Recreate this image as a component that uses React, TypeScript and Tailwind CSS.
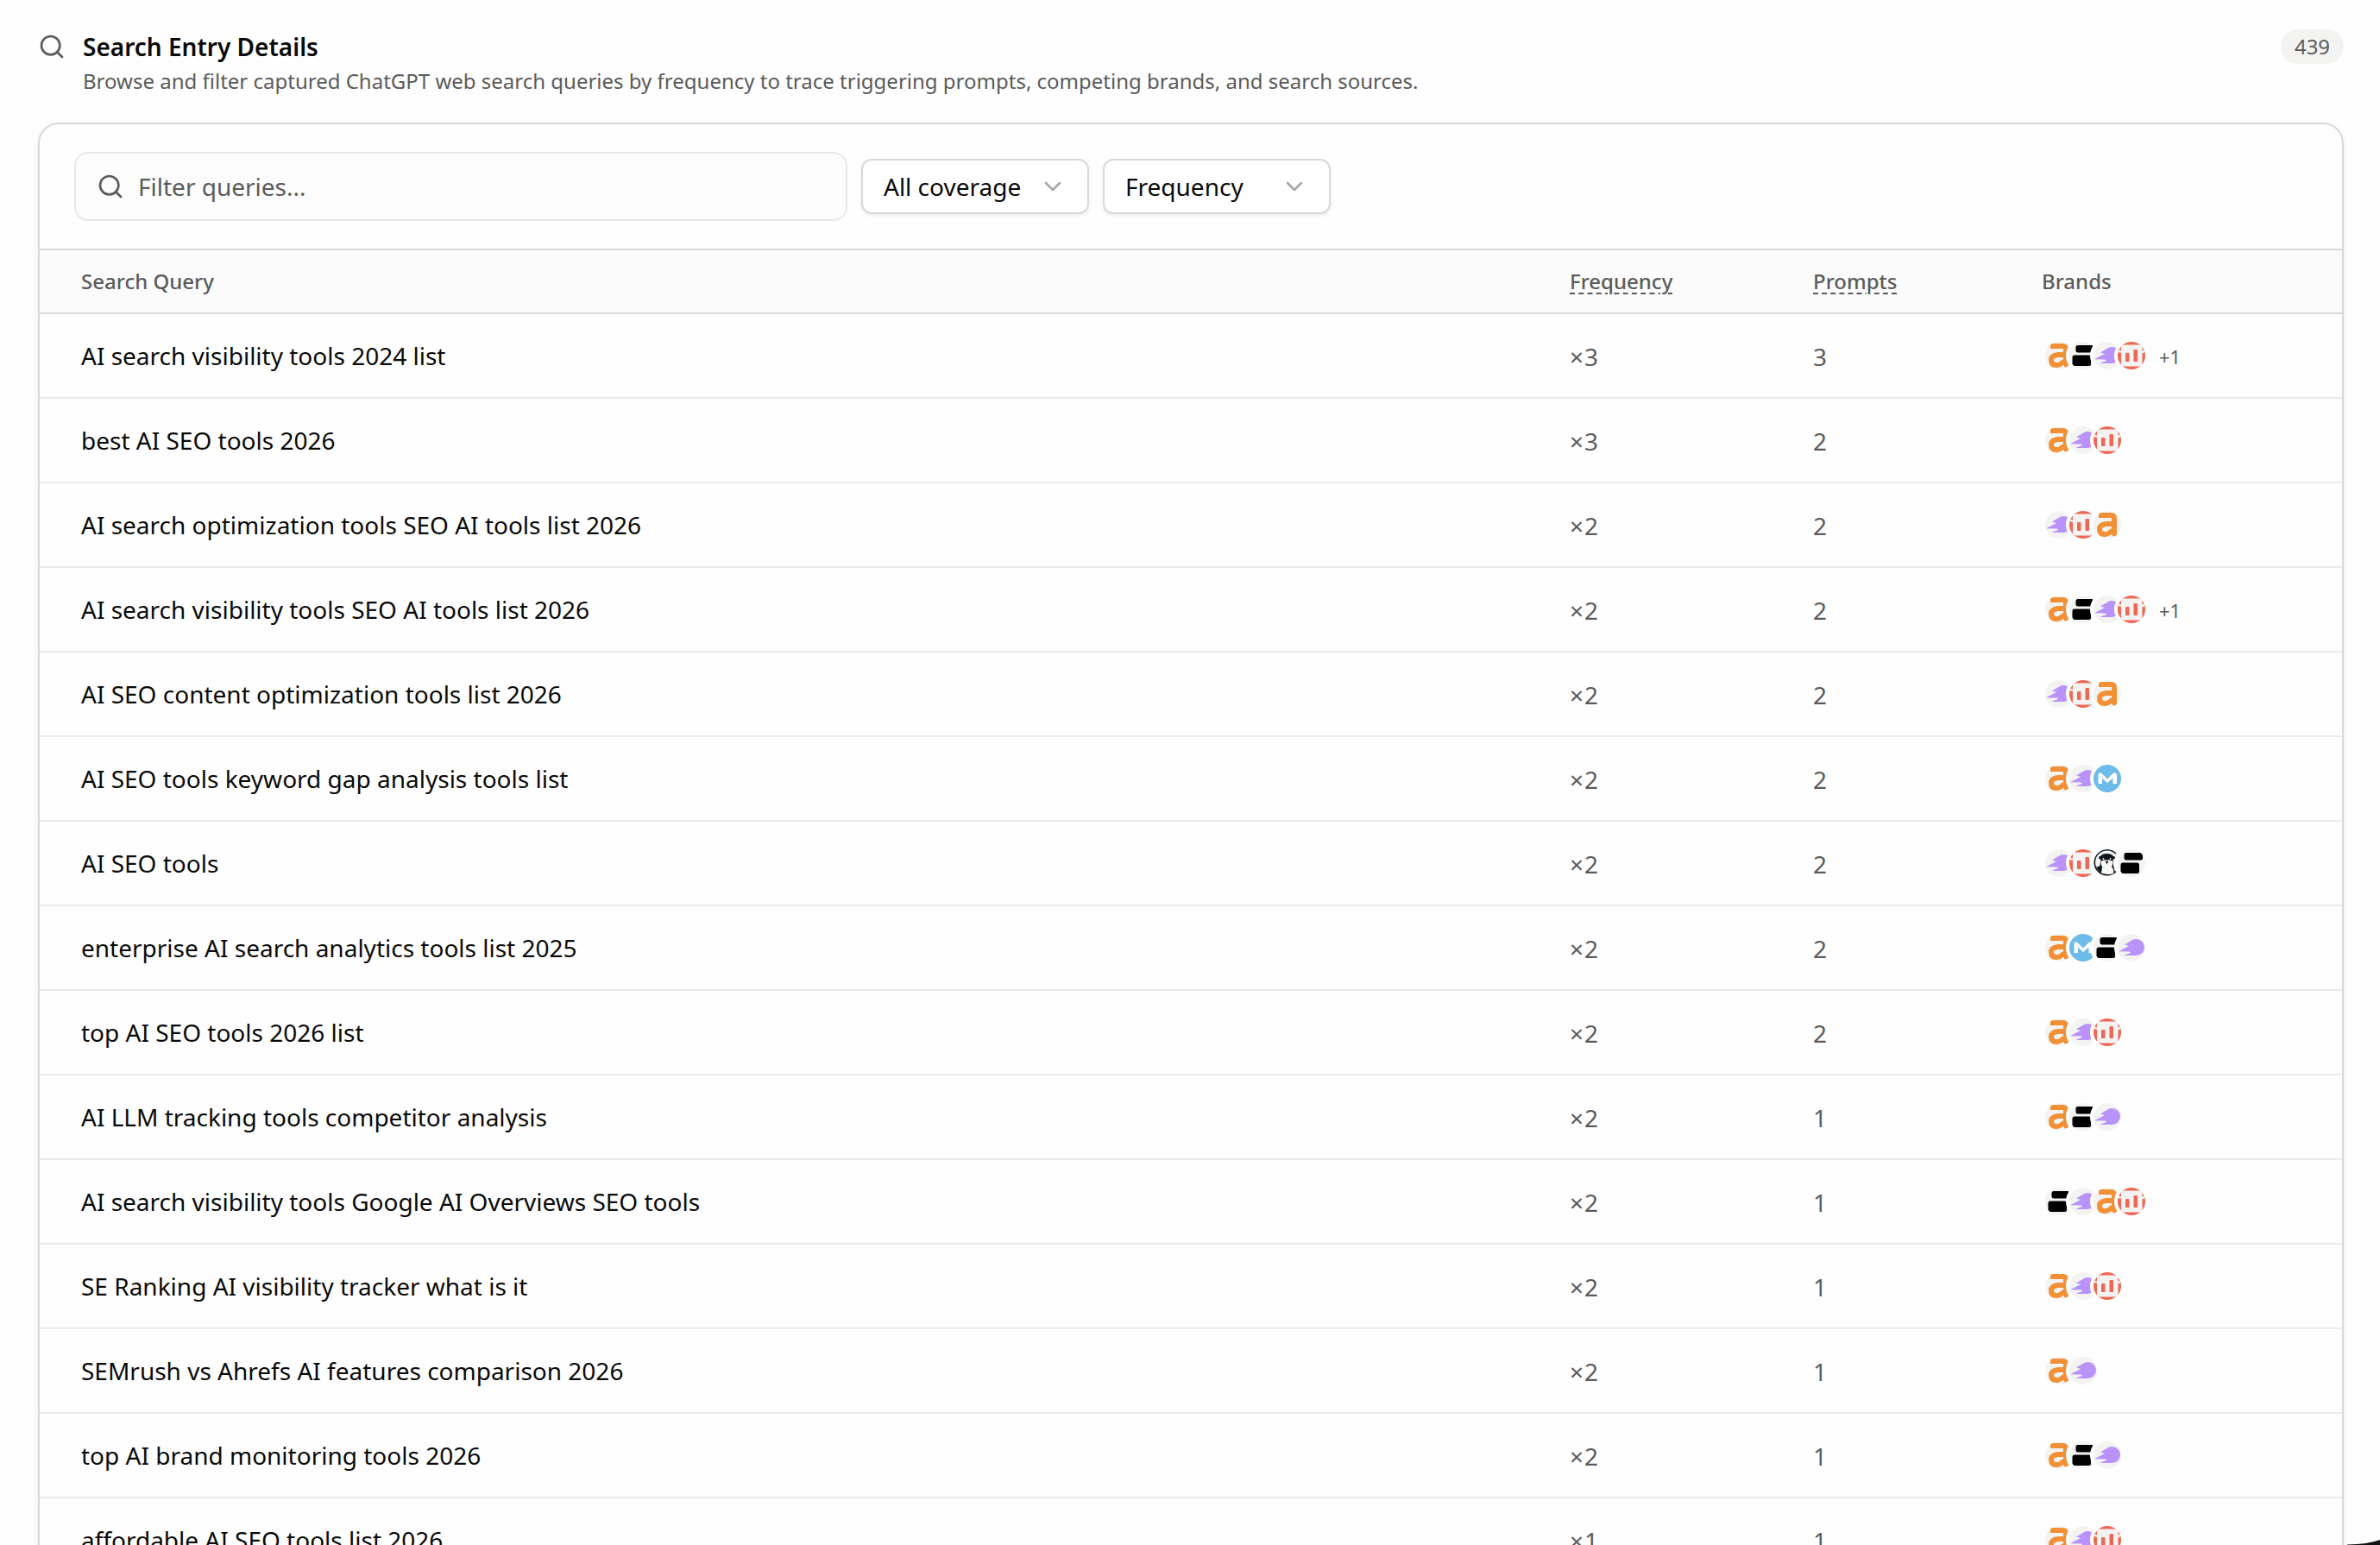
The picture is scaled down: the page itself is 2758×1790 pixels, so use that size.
import { ChevronDown, Search } from "lucide-react"
import { clsx } from "clsx"

type Brand = "ahrefs" | "profound" | "semrush" | "ranking" | "moz" | "otterly"

type Entry = {
  query: string
  frequency: number
  prompts: number
  brands: Brand[]
  extra?: number
}

const entries: Entry[] = [
  { query: "AI search visibility tools 2024 list", frequency: 3, prompts: 3, brands: ["ahrefs", "profound", "semrush", "ranking"], extra: 1 },
  { query: "best AI SEO tools 2026", frequency: 3, prompts: 2, brands: ["ahrefs", "semrush", "ranking"] },
  { query: "AI search optimization tools SEO AI tools list 2026", frequency: 2, prompts: 2, brands: ["semrush", "ranking", "ahrefs"] },
  { query: "AI search visibility tools SEO AI tools list 2026", frequency: 2, prompts: 2, brands: ["ahrefs", "profound", "semrush", "ranking"], extra: 1 },
  { query: "AI SEO content optimization tools list 2026", frequency: 2, prompts: 2, brands: ["semrush", "ranking", "ahrefs"] },
  { query: "AI SEO tools keyword gap analysis tools list", frequency: 2, prompts: 2, brands: ["ahrefs", "semrush", "moz"] },
  { query: "AI SEO tools", frequency: 2, prompts: 2, brands: ["semrush", "ranking", "otterly", "profound"] },
  { query: "enterprise AI search analytics tools list 2025", frequency: 2, prompts: 2, brands: ["ahrefs", "moz", "profound", "semrush"] },
  { query: "top AI SEO tools 2026 list", frequency: 2, prompts: 2, brands: ["ahrefs", "semrush", "ranking"] },
  { query: "AI LLM tracking tools competitor analysis", frequency: 2, prompts: 1, brands: ["ahrefs", "profound", "semrush"] },
  { query: "AI search visibility tools Google AI Overviews SEO tools", frequency: 2, prompts: 1, brands: ["profound", "semrush", "ahrefs", "ranking"] },
  { query: "SE Ranking AI visibility tracker what is it", frequency: 2, prompts: 1, brands: ["ahrefs", "semrush", "ranking"] },
  { query: "SEMrush vs Ahrefs AI features comparison 2026", frequency: 2, prompts: 1, brands: ["ahrefs", "semrush"] },
  { query: "top AI brand monitoring tools 2026", frequency: 2, prompts: 1, brands: ["ahrefs", "profound", "semrush"] },
  { query: "affordable AI SEO tools list 2026", frequency: 1, prompts: 1, brands: ["ahrefs", "semrush", "ranking"] },
]

const columns = "grid grid-cols-[1725px_282px_265px_1fr] items-center"

export default function App() {
  return (
    <div className="relative h-[1790px] w-[2758px] overflow-hidden bg-[#fefefe] font-['Noto_Sans',sans-serif] text-[28px] text-[#0a0a0a]">
      <div className="pt-[34px] pr-[42px] pl-[44px]">
        {/* Section heading */}
        <div className="flex h-[108px] items-start justify-between">
          <div className="flex">
            <Search size={32} strokeWidth={2} className="mt-[4px] text-[#5b5b5b]" />
            <div className="ml-[20px]">
              <h2 className="text-[28px] leading-[40px] font-semibold">Search Entry Details</h2>
              <p className="text-[24px] leading-[40px] text-[#5b5b5b]">
                Browse and filter captured ChatGPT web search queries by frequency to trace triggering prompts, competing brands, and search sources.
              </p>
            </div>
          </div>
          <span className="flex h-[40px] w-[73px] items-center justify-center rounded-full bg-[#f3f3f2] text-[24px] text-[#5b5b5b]">
            439
          </span>
        </div>

        {/* Card */}
        <div className="h-[1800px] overflow-hidden rounded-[24px] border-2 border-[#d9d9d9] shadow-[0_2px_6px_rgba(0,0,0,0.06)]">
          <div className="flex h-[144px] items-center gap-4 px-[40px]">
            <div className="flex h-[80px] w-[896px] items-center gap-4 rounded-[16px] border-2 border-[#e8e8e8] bg-[#fcfcfc] px-6 text-[#5b5b5b]">
              <Search size={32} strokeWidth={2} />
              <span>Filter queries...</span>
            </div>
            <Select label="All coverage" />
            <Select label="Frequency" />
          </div>

          <div className={clsx(columns, "h-[76px] border-y-2 border-[#d9d9d9] bg-[#fbfbfb] pl-[48px] text-[24px] font-medium text-[#5b5b5b]")}>
            <span>Search Query</span>
            <span><Dashed>Frequency</Dashed></span>
            <span><Dashed>Prompts</Dashed></span>
            <span>Brands</span>
          </div>

          {entries.map((entry) => (
            <div key={entry.query} className={clsx(columns, "h-[98px] border-b-2 border-[#ebebeb] pl-[48px]")}>
              <span>{entry.query}</span>
              <span className="pt-[2px] text-[#5b5b5b]">
                <span className="mr-px">×</span>
                {entry.frequency}
              </span>
              <span className="pt-[2px] text-[#5b5b5b]">{entry.prompts}</span>
              <div className="flex items-center">
                {entry.brands.map((brand) => (
                  <BrandIcon key={brand} brand={brand} />
                ))}
                {entry.extra && <span className="ml-[24px] pt-[2px] text-[22px] text-[#5b5b5b]">+{entry.extra}</span>}
              </div>
            </div>
          ))}
        </div>
      </div>

      {/* Edge of the floating chat button */}
      <svg className="absolute right-0 bottom-0" width="38" height="6" viewBox="0 0 38 6">
        <path d="M0 6 L0 5.6 Q24 5 38 0 V6 Z" fill="#111" />
      </svg>
    </div>
  )
}

function Select({ label }: { label: string }) {
  return (
    <div className="flex h-[64px] w-[264px] items-center justify-between rounded-[12px] border-2 border-[#d9d9d9] bg-white px-6 shadow-[0_2px_4px_rgba(0,0,0,0.07)]">
      <span>{label}</span>
      <ChevronDown size={32} strokeWidth={2} className="text-[#a8a8a8]" />
    </div>
  )
}

function Dashed({ children }: { children: string }) {
  return <span className="underline decoration-dashed decoration-[2px] underline-offset-[4px]">{children}</span>
}

function BrandIcon({ brand }: { brand: Brand }) {
  return (
    <span className="mr-[-12px] size-[40px] rounded-full border-4 border-[#fefefe] bg-[#f3f3f2]">
      <svg width="32" height="32" viewBox="0 0 32 32" className="rounded-full">
        {brand === "ahrefs" && (
          <g fill="none" stroke="#f19035" strokeWidth="6">
            <path d="M6 5 H21 Q24 5 24 9 V26 Q24 27 27 27" />
            <path d="M22 15 H15 Q7 16 7 21 Q7 27 13 27 Q18 27 22 22" />
          </g>
        )}
        {brand === "profound" && (
          <>
            <rect x="7.5" y="4" width="21.5" height="8.5" rx="2.5" />
            <rect x="3.5" y="15.5" width="21.5" height="12.5" rx="2.5" />
          </>
        )}
        {brand === "semrush" && (
          <path
            fill="#b993f9"
            d="M1 20.3 L13 14 L8 12.5 L18 6.6 Q19.5 6 21.5 6 A9.5 9.5 0 0 1 21.5 25 H8.5 V24.3 L15 22 L14 20.5 Z"
          />
        )}
        {brand === "ranking" && (
          <g fill="#ee6855">
            <path fillRule="evenodd" d="M0 0 H32 V32 H0 Z M7 3.5 Q4 3.5 4 7 V25 Q4 28.5 7 28.5 H25 Q28.5 28.5 28.5 25 V7 Q28.5 3.5 25 3.5 Z" />
            <path fill="#f3f3f2" d="M0 9 L5 11 V13 L0 12 Z M27 11 L32 9 V12 L27 14 Z" />
            <rect x="9" y="13" width="4.5" height="10" rx="1" />
            <rect x="18.5" y="9" width="4.5" height="14" rx="1" />
          </g>
        )}
        {brand === "moz" && (
          <>
            <rect width="32" height="32" fill="#6dbbe8" />
            <path fill="#fff" d="M5.5 22 V11 Q5.5 9.5 7 9.5 H9 L16 16.5 L23 9.5 H25 Q27 9.5 27 11 V22 H22.5 V15.5 L16 21 L10 15.5 V22 Z" />
          </>
        )}
        {brand === "otterly" && (
          <>
            <path fill="none" stroke="#10171d" strokeWidth="1.6" d="M26 5 A14.5 14.5 0 1 0 26 25.5" />
            {/* shoulders and head */}
            <path fill="#10171d" d="M3 20 Q8 21 8 16 L8.5 12 L6 10.5 Q5.5 8 8 8 Q10 5 15.5 5 Q21 5 23 8 Q25.5 8 25 10.5 L22.5 12 Q22.5 19 25 27 Q20 30 15 30 Q7 29 3 20 Z" />
            {/* muzzle and chest */}
            <path fill="#f8f8f6" d="M8.5 14 Q12 11.5 15.5 12.5 Q19 11.5 22.5 14 Q22.5 18.5 21 20 Q24 23 23 28 Q16 30 9 27.5 Q10 23 10 20 Q8.5 18 8.5 14 Z" />
            <circle cx="11.5" cy="11" r="0.9" fill="#f8f8f6" />
            <circle cx="19.5" cy="11" r="0.9" fill="#f8f8f6" />
            <path fill="#10171d" d="M13.3 13.8 H17.7 L16 16 V17.2 H15 V16 Z" />
          </>
        )}
      </svg>
    </span>
  )
}
